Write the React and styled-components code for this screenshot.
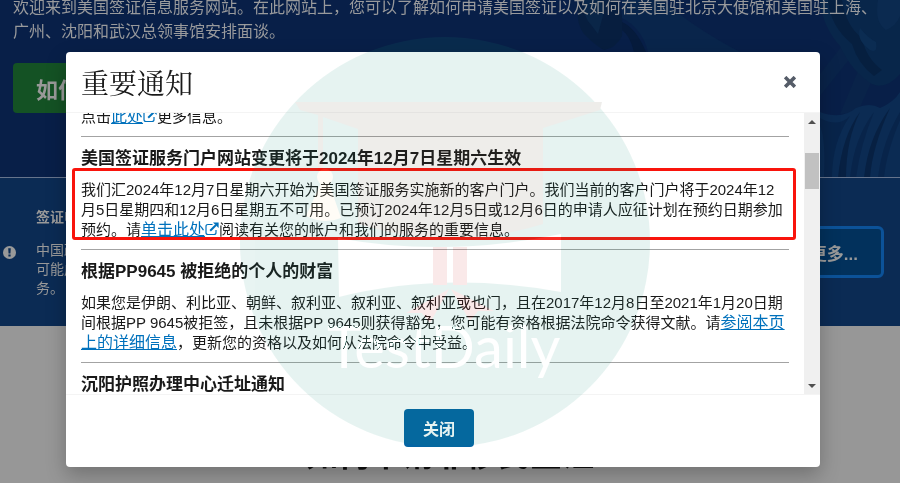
import React, { useLayoutEffect, useRef } from 'react'
import styled, { createGlobalStyle } from 'styled-components'


const App = () => {
  const bodyRef = useRef(null);

  useLayoutEffect(() => {
    bodyRef.current.scrollTop = 26;
  }, []);

  const scrollBody = (amount) => {
    bodyRef.current.scrollBy({ top: amount });
  }

  return (
    <Page>
      <GlobalStyle />
      <Hero>
        <Statue />
        <HeroText>
          欢迎来到美国签证信息服务网站。在此网站上，您可以了解如何申请美国签证以及如何在美国驻北京大使馆和美国驻上海、广州、沈阳和武汉总领事馆安排面谈。
        </HeroText>
        <ApplyButton type="button">如何申请</ApplyButton>
      </Hero>

      <NoticeBar>
        <svg className="noticeIcon" viewBox="0 0 14 14" aria-hidden="true">
          <circle cx="7" cy="7" r="7" fill="#999" />
          <path d="M5.6 2.4 H8.4 L8 8 H6 Z M5.8 9.2 H8.2 V11.4 H5.8 Z" fill="#0b2b54" />
        </svg>
        <div className="noticeText">
          <h2>签证申请</h2>
          <p>中国政府<br />可能成服<br />务。</p>
        </div>
        <MoreButton type="button">了解更多...</MoreButton>
      </NoticeBar>

      <Steps>
        <h2>如何申请非移民签证</h2>
      </Steps>

      <Overlay>
        <Modal role="dialog" aria-labelledby="modalTitle">
          <ModalHeader>
            <h1 id="modalTitle">重要通知</h1>
            <CloseIcon type="button" aria-label="关闭">
              <svg width="12" height="12" viewBox="0 0 12 12">
                <path d="M2.4 2.4 L9.6 9.6 M9.6 2.4 L2.4 9.6" stroke="#555c68" strokeWidth="3.6" strokeLinecap="square" />
              </svg>
            </CloseIcon>
          </ModalHeader>

          <ModalBody>
            <Notices ref={bodyRef}>
              <Notice>
                <p>点击<a href="#more">此处</a><ExternalIcon />更多信息。</p>
              </Notice>
              <Notice>
                <h3>美国签证服务门户网站变更将于2024年12月7日星期六生效</h3>
                <Marked>
                  我们汇2024年12月7日星期六开始为美国签证服务实施新的客户门户。我们当前的客户门户将于2024年12月5日星期四和12月6日星期五不可用。已预订2024年12月5日或12月6日的申请人应征计划在预约日期参加预约。请<a href="#portal">单击此处</a><ExternalIcon />阅读有关您的帐户和我们的服务的重要信息。
                </Marked>
              </Notice>
              <Notice>
                <h3>根据PP9645 被拒绝的个人的财富</h3>
                <p>
                  如果您是伊朗、利比亚、朝鲜、叙利亚、叙利亚、叙利亚或也门，且在2017年12月8日至2021年1月20日期间根据PP 9645被拒签，且未根据PP 9645则获得豁免，您可能有资格根据法院命令获得文献。请<a href="#pp9645">参阅本页上的详细信息</a>，更新您的资格以及如何从法院命令中受益。
                </p>
              </Notice>
              <Notice>
                <h3>沉阳护照办理中心迁址通知</h3>
              </Notice>
            </Notices>
            <ScrollBar>
              <button type="button" aria-label="向上滚动" onClick={() => scrollBody(-40)}>
                <svg width="8" height="4" viewBox="0 0 8 4"><path d="M4 0 L8 4 H0 Z" fill="#505050" /></svg>
              </button>
              <div className="track"><div className="thumb" /></div>
              <button type="button" aria-label="向下滚动" onClick={() => scrollBody(40)}>
                <svg width="8" height="4" viewBox="0 0 8 4"><path d="M0 0 H8 L4 4 Z" fill="#505050" /></svg>
              </button>
            </ScrollBar>
          </ModalBody>

          <ModalFooter>
            <CloseButton type="button">关闭</CloseButton>
          </ModalFooter>
        </Modal>
      </Overlay>

      <Watermark />
      <WatermarkName>TestDaily</WatermarkName>
    </Page>
  )
}

export default App


const ExternalIcon = () => (
  <LinkIcon width="14" height="14" viewBox="0 0 14 14" aria-hidden="true">
    <path d="M7.5 2.5 H3 Q1 2.5 1 4.5 V10.5 Q1 12.5 3 12.5 H9 Q11 12.5 11 10.5 V8" fill="none" stroke="#0071bc" strokeWidth="1.2" />
    <path d="M5.2 8.8 L11 3" stroke="#0071bc" strokeWidth="2" />
    <path d="M8 0.4 H13.6 V6 Z" fill="#0071bc" />
  </LinkIcon>
)

const Statue = () => (
  <StatueArt viewBox="0 0 330 178" aria-hidden="true">
    {/* torch hand and arm */}
    <path d="M10 0 Q4 20 14 34 Q26 46 34 50 Q46 48 52 36 Q54 16 48 0 Z" fill="#071e3f" />
    <path d="M14 0 Q12 16 22 26 L28 34 L34 12 L30 0 Z" fill="#0a2648" />
    <path d="M52 18 Q72 28 78 52 H170 Q124 28 92 0 H52 Z" fill="#09254b" />
    <path d="M52 22 Q66 28 76 52 H64 Q60 36 52 30 Z" fill="#061b3c" />
    {/* crown spikes */}
    <path d="M250 74 L278 38 L290 46 L250 96 Z" fill="#092349" />
    <path d="M270 114 L290 66 L304 76 L288 112 Z" fill="#092349" />
    {/* face and hair */}
    <path d="M250 0 Q252 26 270 46 Q282 72 302 84 Q316 90 330 74 V0 Z" fill="#08264a" />
    <path d="M258 0 Q260 26 282 44 Q288 64 304 76 L312 70 Q296 58 292 38 Q276 26 272 0 Z" fill="#061f3f" />
    <path d="M290 28 Q286 40 300 50 Q308 54 306 42 Q298 38 290 28 Z" fill="#0b2c52" />
    <path d="M308 0 Q304 22 316 30 Q326 26 330 16 V0 Z" fill="#0b2a50" />
    {/* robe */}
    <path d="M250 112 Q272 120 286 108 Q300 102 310 108 Q324 102 330 92 V178 H250 Z" fill="#0b2b53" />
    <path d="M250 118 Q268 128 280 116 Q262 142 262 178 H254 Q256 140 250 126 Z" fill="#08244a" />
    <path d="M290 112 Q276 140 276 178 H268 Q272 136 290 112 Z" fill="#072042" />
    <path d="M304 112 Q290 146 286 178 H280 Q284 138 304 112 Z" fill="#08244a" />
    <path d="M320 108 Q302 148 300 178 H294 Q298 138 320 108 Z" fill="#072042" />
    <path d="M330 120 Q316 154 314 178 H308 Q312 142 330 112 Z" fill="#08244a" />
  </StatueArt>
)

const Watermark = () => (
  <WatermarkArt viewBox="0 0 410 410" aria-hidden="true">
    <g opacity=".1">
      <circle cx="205" cy="205" r="205" fill="#19917d" />
      <path d="M55 65 H362 L360 73 L303 91 V187 Q210 216 118 187 V92 L83 80 V135 H78 V78 L60 73 Z" fill="#5f5541" />
      <path d="M98 201 Q205 221 321 197 V255 Q205 234 99 260 Z" fill="#fff" />
      <circle cx="85" cy="140" r="8" fill="#ffebb0" />
      <path d="M81 146 H89 L101 181 Q84 188 66 179 Z" fill="#ffebb0" />
      <path d="M193 210 H207 V248 H193 Z M213 210 H227 V248 H213 Z" fill="#d73737" />
      <path d="M209 252 L190 286 L182 276 L166 276 Z M211 252 L230 284 L238 274 L254 274 Z" fill="#d73737" />
    </g>
  </WatermarkArt>
)


const GlobalStyle = createGlobalStyle`
* {
  box-sizing: border-box;
}

body {
  margin: 0;
  overflow: hidden;
  background-color: #979797;
  font-family: "Liberation Sans", "Noto Sans CJK SC", sans-serif;
}

h1, h2, h3, p {
  margin: 0;
}

button {
  font-family: inherit;
  cursor: pointer;
}
`

const Page = styled.div`
position: relative;
min-height: 100vh;
overflow: hidden;
background-color: #979797;
`

const Hero = styled.header`
position: relative;
height: 178px;
padding: 0 13px;
background-color: #081f48;
border-bottom: 1px solid #66748c;
overflow: hidden;
`

const StatueArt = styled.svg`
position: absolute;
top: 0;
right: 0;
width: 330px;
height: 178px;
`

const HeroText = styled.p`
position: relative;
margin-top: -6px;
font-family: "Noto Sans CJK SC", sans-serif;
font-size: 16px;
line-height: 24px;
color: #999a9c;
`

const ApplyButton = styled.button`
height: 50px;
margin-top: 21px;
padding: 0 23px;
border: none;
border-radius: 4px;
background-color: #145224;
color: #999;
font-size: 22px;
font-weight: bold;
`

const NoticeBar = styled.section`
display: flex;
align-items: center;
height: 148px;
padding: 0 16px 0 3px;
background-color: #0b2b54;
color: #999;

.noticeIcon {
  flex: none;
  width: 13px;
  height: 13px;
  margin-right: 20px;
}

.noticeText {
  flex: 1;
  padding-top: 2px;
  font-size: 14px;
  line-height: 19px;
}

h2 {
  margin-bottom: 14px;
  font-size: 14px;
}
`

const MoreButton = styled.button`
height: 52px;
padding: 0 23px;
border: 3px solid #0c5298;
border-radius: 6px;
background-color: #02315c;
color: #999;
font-size: 17px;
font-weight: bold;
`

const Steps = styled.section`
padding-top: 105px;
text-align: center;

h2 {
  font-size: 32px;
  line-height: 48px;
  color: #101010;
}
`

const Overlay = styled.div`
position: absolute;
inset: 0;
display: flex;
justify-content: center;
align-items: flex-start;
padding: 52px 80px 0 66px;
`

const Modal = styled.section`
flex: 1;
border-radius: 4px;
background-color: #fff;
box-shadow: 0 8px 20px rgba(0, 0, 0, .25);
color: #191919;
`

const ModalHeader = styled.div`
display: flex;
justify-content: space-between;
align-items: center;
height: 60px;
padding: 0 22px 0 15px;

h1 {
  font-family: "Noto Serif CJK SC", "Liberation Serif", serif;
  font-size: 28px;
  font-weight: normal;
  line-height: 40px;
}
`

const CloseIcon = styled.button`
display: flex;
padding: 2px;
border: none;
background: none;
`

const ModalBody = styled.div`
display: flex;
height: 283px;
border-top: 1px solid #f4f4f4;
border-bottom: 1px solid #f4f4f4;
`

const Notices = styled.div`
flex: 1;
overflow-y: auto;
scrollbar-width: none;
padding: 10px 15px 40px;
`

const Notice = styled.article`
padding: 10px 0 9px;
font-size: 15px;
line-height: 20px;

& + & {
  border-top: 1px solid #a3a3a3;
}

h3 {
  margin-bottom: 9px;
  font-size: 17px;
  line-height: 24px;
}

a {
  font-size: 16px;
  line-height: 16px;
  color: #0071bc;
}
`

/* red frame round the notice that matters */
const Marked = styled.p`
position: relative;

&::after {
  content: "";
  position: absolute;
  inset: -12px -7px 0 -9px;
  border: 3px solid #f9140c;
  border-radius: 3px;
  pointer-events: none;
}
`

const LinkIcon = styled.svg`
vertical-align: -1px;
`

const ScrollBar = styled.div`
display: flex;
flex-direction: column;
width: 16px;
background-color: #f0f0f0;

button {
  display: flex;
  justify-content: center;
  align-items: center;
  height: 17px;
  padding: 0;
  border: none;
  background: none;
}

.track {
  flex: 1;
  padding: 23px 1px 0 1px;
}

.thumb {
  height: 36px;
  background-color: #c1c1c1;
}
`

const ModalFooter = styled.div`
display: flex;
justify-content: center;
padding: 14px 23px 20px 15px;
`

const CloseButton = styled.button`
width: 70px;
height: 38px;
border: none;
border-radius: 4px;
background-color: #0364a3;
color: #fff;
font-size: 16px;
font-weight: bold;
`

const WatermarkArt = styled.svg`
position: absolute;
top: 37px;
left: 240px;
width: 410px;
height: 410px;
pointer-events: none;
`

const WatermarkName = styled.span`
position: absolute;
top: 310px;
left: 327px;
font-family: Lato, sans-serif;
font-size: 58px;
line-height: 72px;
color: #fff;
mix-blend-mode: overlay;
pointer-events: none;
`
